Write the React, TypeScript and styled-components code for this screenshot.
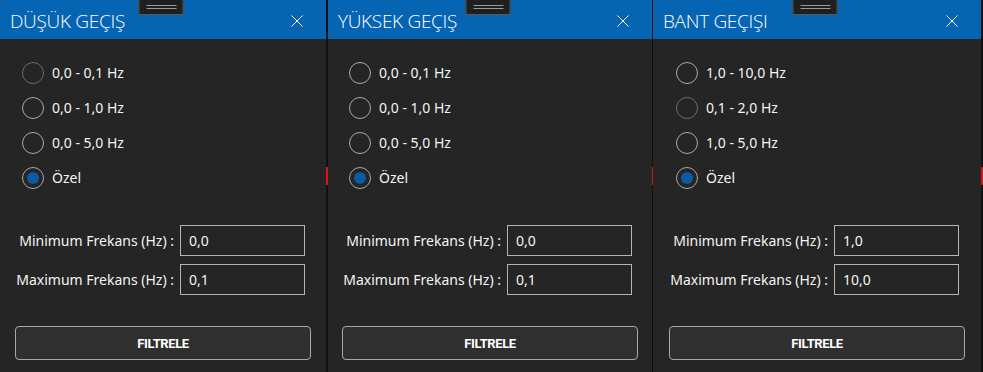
import React from 'react';
import styled, { createGlobalStyle } from 'styled-components';

const GlobalStyle = createGlobalStyle`
    html, body {
        margin: 0;
        padding: 0;
        background: #141414;
        font-family: 'Noto Sans', 'Open Sans', sans-serif;
    }
`;

type Range = {
    label: string;
    dim?: boolean;
};

type FilterPanelProps = {
    title: string;
    width: number;
    ranges: Range[];
    min: string;
    max: string;
};

const Desktop = styled.div`
    display: flex;
    width: 983px;
    height: 372px;
    overflow: hidden;
`;

const Separator = styled.div<{ $width: number; $line: string }>`
    width: ${(p) => p.$width}px;
    flex-shrink: 0;
    background: linear-gradient(to bottom, #111 0, #111 167px, #d2141b 167px, #d2141b 185px, #111 185px),
        ${(p) => p.$line};
`;

const Panel = styled.section<{ $width: number }>`
    position: relative;
    width: ${(p) => p.$width}px;
    flex-shrink: 0;
    display: flex;
    flex-direction: column;
    background: #252525;
    color: #f4f4f4;
`;

const TitleBar = styled.header`
    height: 39px;
    display: flex;
    align-items: center;
    justify-content: space-between;
    padding: 3px 23px 0 10px;
    box-sizing: border-box;
    background: #0565b2;
`;

const Title = styled.h2`
    margin: 0;
    font-family: 'Open Sans', sans-serif;
    font-size: 19px;
    font-weight: 300;
    letter-spacing: -0.3px;
    color: #fff;
`;

const CloseButton = styled.button`
    width: 12px;
    height: 12px;
    padding: 0;
    border: 0;
    background: none;
    display: flex;
    margin-top: -1px;
`;

const Grip = styled.div`
    position: absolute;
    top: 0;
    left: 50%;
    transform: translateX(-50%);
    width: 45px;
    height: 15px;
    margin-left: -2px;
    box-sizing: border-box;
    background: #1f1f1f;
    border: 1px solid #5a5a5a;
    border-top: 0;
    display: flex;
    flex-direction: column;
    justify-content: center;
    align-items: center;
    gap: 2px;

    &::before,
    &::after {
        content: '';
        width: 30px;
        height: 1px;
        background: #9a9a9a;
    }
`;

const Body = styled.div`
    width: 296px;
    margin: 0 auto;
    display: flex;
    flex-direction: column;
`;

const RadioList = styled.div`
    display: flex;
    flex-direction: column;
    padding: 16px 0 0 7px;
`;

const RadioRow = styled.label`
    height: 35px;
    display: flex;
    align-items: center;
    gap: 8px;
    font-size: 14px;
`;

const RadioCircle = styled.span<{ $checked: boolean; $dim?: boolean }>`
    width: 22px;
    height: 22px;
    box-sizing: border-box;
    border-radius: 50%;
    border: 1.5px solid ${(p) => (p.$dim ? '#6a6a6a' : '#a8a8a8')};
    display: flex;
    align-items: center;
    justify-content: center;

    &::after {
        content: '';
        width: 12px;
        height: 12px;
        border-radius: 50%;
        background: ${(p) => (p.$checked ? '#0b5aa6' : 'transparent')};
    }
`;

const Form = styled.div`
    display: grid;
    grid-template-columns: 159px 125px;
    column-gap: 6px;
    row-gap: 8px;
    align-items: center;
    margin-top: 30px;
`;

const FieldLabel = styled.span`
    text-align: right;
    font-size: 14px;
    white-space: nowrap;
`;

const Input = styled.input`
    height: 31px;
    box-sizing: border-box;
    padding: 0 8px;
    background: #252525;
    border: 1px solid #b4b4b4;
    color: #f4f4f4;
    font-family: inherit;
    font-size: 14px;
    outline: none;
`;

const FilterButton = styled.button`
    margin-top: 31px;
    height: 34px;
    border: 1px solid #a8a8a8;
    border-radius: 4px;
    background: #2f2f2f;
    color: #fff;
    font-family: 'Roboto', sans-serif;
    font-size: 13px;
    font-weight: 700;
    letter-spacing: -0.4px;
`;

const CloseIcon = () => (
    <svg width="12" height="12" viewBox="0 0 12 12">
        <path d="M0.5 0.5 L11.5 11.5 M11.5 0.5 L0.5 11.5" stroke="#fff" strokeWidth="1" />
    </svg>
);

const FilterPanel: React.FC<FilterPanelProps> = ({ title, width, ranges, min, max }) => {
    return (
        <Panel $width={width}>
            <TitleBar>
                <Title>{title}</Title>
                <CloseButton aria-label="Kapat">
                    <CloseIcon />
                </CloseButton>
            </TitleBar>
            <Grip />
            <Body>
                <RadioList>
                    {ranges.map((r) => (
                        <RadioRow key={r.label}>
                            <RadioCircle $checked={false} $dim={r.dim} />
                            {r.label}
                        </RadioRow>
                    ))}
                    <RadioRow>
                        <RadioCircle $checked={true} />
                        Özel
                    </RadioRow>
                </RadioList>
                <Form>
                    <FieldLabel>Minimum Frekans (Hz) :</FieldLabel>
                    <Input defaultValue={min} />
                    <FieldLabel>Maximum Frekans (Hz) :</FieldLabel>
                    <Input defaultValue={max} />
                </Form>
                <FilterButton>FILTRELE</FilterButton>
            </Body>
        </Panel>
    );
};

const App: React.FC = () => {
    return (
        <>
            <GlobalStyle />
            <Desktop>
                <FilterPanel
                    title="DÜŞÜK GEÇIŞ"
                    width={326}
                    ranges={[{ label: '0,0 - 0,1 Hz', dim: true }, { label: '0,0 - 1,0 Hz' }, { label: '0,0 - 5,0 Hz' }]}
                    min="0,0"
                    max="0,1"
                />
                <Separator $width={2} $line="linear-gradient(to right, #111 50%, #1565b0 50%)" />
                <FilterPanel
                    title="YÜKSEK GEÇIŞ"
                    width={324}
                    ranges={[{ label: '0,0 - 0,1 Hz' }, { label: '0,0 - 1,0 Hz' }, { label: '0,0 - 5,0 Hz' }]}
                    min="0,0"
                    max="0,1"
                />
                <Separator $width={1} $line="#1565b0" />
                <FilterPanel
                    title="BANT GEÇIŞI"
                    width={328}
                    ranges={[{ label: '1,0 - 10,0 Hz' }, { label: '0,1 - 2,0 Hz', dim: true }, { label: '1,0 - 5,0 Hz' }]}
                    min="1,0"
                    max="10,0"
                />
                <Separator $width={2} $line="linear-gradient(to right, #111 50%, #1565b0 50%)" />
            </Desktop>
        </>
    );
};

export default App;
